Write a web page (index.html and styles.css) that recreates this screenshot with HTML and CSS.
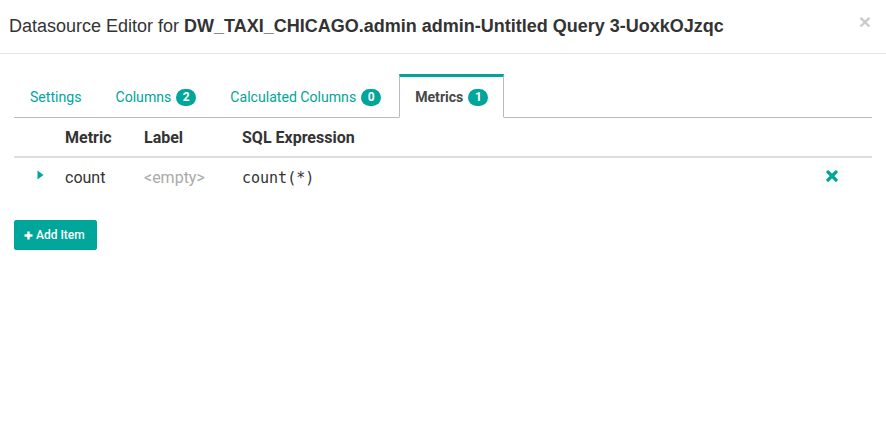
FILE: index.html
```html
<!DOCTYPE html>
<html>
<head>
<meta charset="utf-8">
<link rel="stylesheet" href="styles.css">
</head>
<body>
<div class="modal">
  <div class="modal-header">
    <h4 class="modal-title">Datasource Editor for <strong>DW_TAXI_CHICAGO.admin admin-Untitled Query 3-UoxkOJzqc</strong></h4>
    <span class="close">×</span>
  </div>
  <div class="modal-body">
    <ul class="nav-tabs">
      <li class="tab"><span class="tab-label">Settings</span></li>
      <li class="tab"><span class="tab-label">Columns</span><span class="badge">2</span></li>
      <li class="tab"><span class="tab-label">Calculated Columns</span><span class="badge">0</span></li>
      <li class="tab active"><span class="tab-label">Metrics</span><span class="badge">1</span></li>
    </ul>
    <table class="grid">
      <colgroup>
        <col class="c-exp"><col class="c-metric"><col class="c-label"><col class="c-sql"><col class="c-del"><col class="c-end">
      </colgroup>
      <thead>
        <tr><th></th><th>Metric</th><th>Label</th><th>SQL Expression</th><th></th><th></th></tr>
      </thead>
      <tbody>
        <tr>
          <td class="exp"><svg width="7" height="10" viewBox="0 0 7 10"><path d="M0.5 0.5 L6.5 5 L0.5 9.5 Z" fill="#00a699"/></svg></td>
          <td>count</td>
          <td class="empty">&lt;empty&gt;</td>
          <td class="code">count(*)</td>
          <td class="del"><svg width="12" height="12" viewBox="0 0 12 12"><path d="M2 2 L10 10 M10 2 L2 10" stroke="#00a699" stroke-width="3.2" stroke-linecap="round"/></svg></td>
          <td></td>
        </tr>
      </tbody>
    </table>
    <button class="btn-add"><svg width="9" height="9" viewBox="0 0 9 9"><path d="M4.5 0.5 V8.5 M0.5 4.5 H8.5" stroke="#fff" stroke-width="2.4"/></svg> Add Item</button>
  </div>
</div>
</body>
</html>
```

FILE: styles.css
```css
* { box-sizing: border-box; }
html, body { margin: 0; padding: 0; background: #fff; }
body { font-family: Roboto, "Liberation Sans", sans-serif; color: #484848; font-size: 14px; }
.modal { width: 886px; height: 425px; }
.modal-header {
  display: flex; align-items: center; justify-content: space-between;
  height: 54px; padding: 0 15px 0 9px; border-bottom: 1px solid #e5e5e5;
}
.modal-title {
  margin: 0; font-family: "Liberation Sans", Arial, sans-serif; font-weight: normal;
  font-size: 18px; color: #333;
}
.modal-title strong { font-weight: bold; }
.close { font-family: "Liberation Sans", Arial, sans-serif; font-size: 21px; font-weight: bold; color: #000; opacity: 0.2; line-height: 1; margin-top: -10px; }
.modal-body { padding: 20px 14px 14px; }
.nav-tabs {
  list-style: none; margin: 0; padding: 0; display: flex; align-items: flex-end;
  border-bottom: 1px solid #bbb;
}
.tab {
  display: flex; align-items: center;
  margin: 0 2px -1px 0; padding: 10px 15px; line-height: 20px;
  border: 1px solid transparent; border-top: 3px solid transparent;
  color: #00a699; font-size: 14.1px;
}
.tab.active { border-color: #bbb; border-top-color: #00a699; border-bottom-color: #fff; color: #484848; font-weight: bold; }
.badge {
  display: inline-block; margin-left: 5px; min-width: 20px; height: 17px; padding: 0 6px;
  border-radius: 9px; background: #00a699; color: #fff; font-size: 12px; font-weight: bold;
  line-height: 17px; text-align: center;
}
.grid { width: 858px; border-collapse: collapse; table-layout: fixed; }
.c-exp { width: 43px; }
.c-metric { width: 79px; }
.c-label { width: 98px; }
.c-sql { width: 582px; }
.c-del { width: 30px; }
.grid th {
  text-align: left; font-weight: bold; color: #333; font-size: 16px;
  padding: 9px 8px 8px; height: 39px; border-bottom: 2px solid #ddd;
}
.grid td { padding: 8px 8px 8px; height: 40px; font-size: 16px; color: #333; vertical-align: middle; }
.grid td.exp { padding: 0 0 5px 23px; }
.grid td.exp svg { display: block; }
.grid td.empty { color: #aaa; }
.grid td.code { font-family: "DejaVu Sans Mono", monospace; font-size: 15px; }
.grid td.del { padding: 0 0 4px 10px; }
.grid td.del svg { display: block; }
.btn-add {
  display: flex; align-items: center; gap: 3px;
  margin-top: 23px; height: 30px; width: 83px; padding: 0 9px;
  background: #00a699; color: #fff; border: 1px solid #00a699; border-radius: 2px;
  font-family: Roboto, sans-serif; font-size: 12px; font-weight: 500;
}
```
